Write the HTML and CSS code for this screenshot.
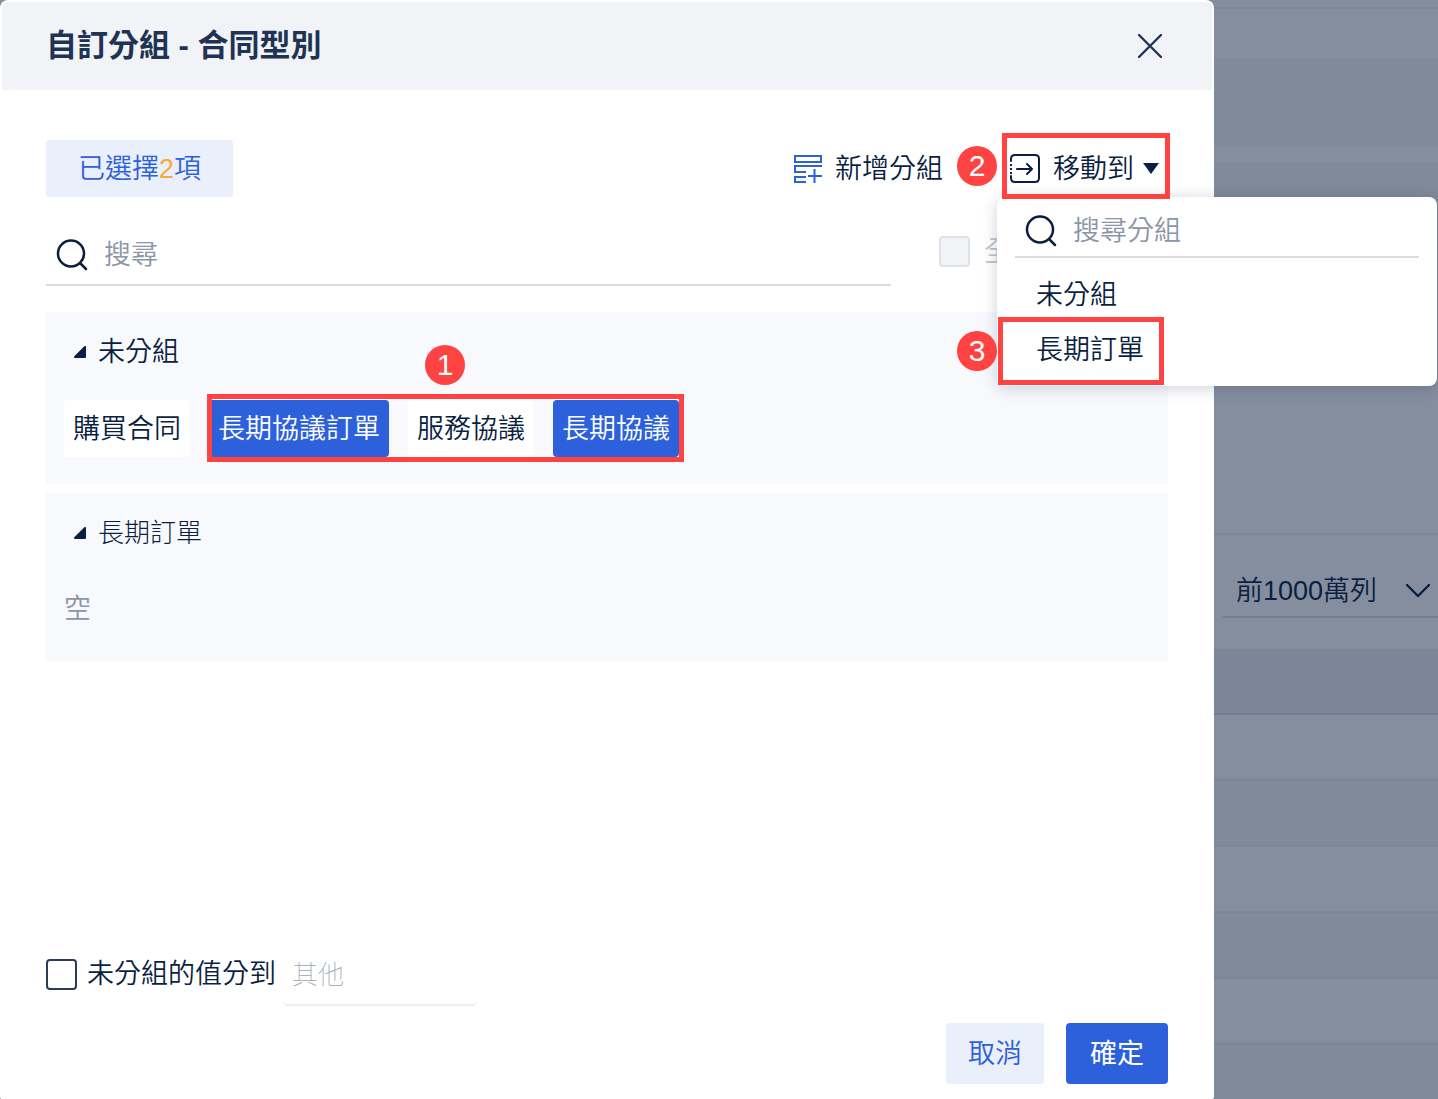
FILE: index.html
```html
<!DOCTYPE html>
<html lang="zh-Hant">
<head>
    <meta charset="UTF-8">
    <meta name="viewport" content="width=device-width, initial-scale=1.0">
    <title>自訂分組 - 合同型別</title>
    <link rel="stylesheet" href="styles.css">
</head>
<body>
    <!-- Page behind the dialog -->
    <div class="page">
        <div class="page-bar"></div>
        <div class="page-strip"></div>
        <div class="page-band"></div>
        <div class="page-divider"></div>
        <div class="page-canvas">
            <div class="page-band"></div>
        </div>
        <div class="page-toolbar">
            <div class="row-limit">
                <select aria-label="列數">
                    <option>前1000萬列</option>
                </select>
                <svg class="chevron" viewBox="0 0 24 14" width="24" height="14"><path d="M1 1l11 11L23 1" fill="none" stroke="currentColor" stroke-width="2.4" stroke-linecap="round" stroke-linejoin="round"/></svg>
            </div>
        </div>
        <div class="grid-header"></div>
        <div class="grid-rows">
            <div class="grid-row"></div>
            <div class="grid-row"></div>
            <div class="grid-row"></div>
            <div class="grid-row"></div>
            <div class="grid-row"></div>
            <div class="grid-row"></div>
        </div>
    </div>

    <div class="dialog" role="dialog" aria-labelledby="dialogTitle">
        <div class="dialog-header">
            <h1 id="dialogTitle">自訂分組 - 合同型別</h1>
            <button class="close-btn" aria-label="關閉">
                <svg viewBox="0 0 24 24" width="24" height="24"><path d="M1 1l22 22M23 1L1 23" fill="none" stroke="currentColor" stroke-width="2.4" stroke-linecap="round"/></svg>
            </button>
        </div>

        <div class="dialog-body">
            <div class="toolbar">
                <button class="selected-count">已選擇<span class="count">2</span>項</button>
                <div class="actions">
                    <button class="action add-group">
                        <svg viewBox="0 0 28 28" width="28" height="28" fill="none" stroke="#2d60db" stroke-width="2">
                            <path d="M1 1h26v6H1zM0 11h28M1 10v7h11M12 27H1v-5h11M20.500 14v14M14 21h14"/>
                        </svg>
                        新增分組
                    </button>
                    <div class="move-to">
                        <button class="action">
                            <svg viewBox="0 0 30 30" width="30" height="30" fill="none" stroke="currentColor" stroke-width="2" stroke-linecap="round" stroke-linejoin="round">
                                <path d="M1 7V5q0-4 4-4h20q4 0 4 4v19q0 4-4 4H5q-4 0-4-4v-2M7 15h15M17 10l5 5-5 5"/>
                                <path d="M0 11h2M0 15h2M0 19h2" stroke-linecap="butt"/>
                            </svg>
                            移動到
                            <svg class="caret" viewBox="0 0 16 12" width="16" height="12"><path d="M0 0h16L8 11z" fill="currentColor"/></svg>
                        </button>
                        <span class="badge">2</span>

                        <div class="menu">
                            <label class="search">
                                <svg viewBox="0 0 32 32" width="32" height="32"><path d="M15 1.500a13 13 0 1 1 0 26 13 13 0 0 1 0-26zM24 24l6 6" fill="none" stroke="currentColor" stroke-width="2.500" stroke-linecap="round"/></svg>
                                <input type="text" placeholder="搜尋分組" aria-label="搜尋分組">
                            </label>
                            <div class="menu-list">
                                <button class="menu-item">未分組</button>
                                <button class="menu-item marked">長期訂單<span class="badge">3</span></button>
                            </div>
                        </div>
                    </div>
                </div>
            </div>

            <div class="filter">
                <label class="search">
                    <svg viewBox="0 0 32 32" width="32" height="32"><path d="M15 1.500a13 13 0 1 1 0 26 13 13 0 0 1 0-26zM24 24l6 6" fill="none" stroke="currentColor" stroke-width="2.500" stroke-linecap="round"/></svg>
                    <input type="text" placeholder="搜尋" aria-label="搜尋">
                </label>
                <label class="select-all"><input class="checkbox" type="checkbox" disabled>全選</label>
            </div>

            <div class="groups">
                <section class="group">
                    <button class="group-title">
                        <svg viewBox="0 0 12 12" width="12" height="12"><path d="M11 1v10H1z" fill="currentColor" stroke="currentColor" stroke-width="2" stroke-linejoin="round"/></svg>
                        未分組
                    </button>
                    <div class="chips">
                        <button class="chip">購買合同</button>
                        <div class="chips-marked">
                            <button class="chip active">長期協議訂單</button>
                            <button class="chip">服務協議</button>
                            <button class="chip active">長期協議</button>
                            <span class="badge">1</span>
                        </div>
                    </div>
                </section>
                <section class="group">
                    <button class="group-title thin">
                        <svg viewBox="0 0 12 12" width="12" height="12"><path d="M11 1v10H1z" fill="currentColor" stroke="currentColor" stroke-width="2" stroke-linejoin="round"/></svg>
                        長期訂單
                    </button>
                    <p class="empty">空</p>
                </section>
            </div>

            <div class="ungrouped">
                <label class="ungrouped-label"><input class="checkbox" type="checkbox">未分組的值分到</label>
                <input class="other-name" type="text" value="其他" aria-label="其他" disabled>
            </div>

            <div class="dialog-footer">
                <button class="button cancel">取消</button>
                <button class="button confirm">確定</button>
            </div>
        </div>
    </div>
</body>
</html>
```
FILE: styles.css
```css
* {
    margin: 0;
    padding: 0;
    box-sizing: border-box;
}

body {
    position: relative;
    min-height: 100vh;
    display: flex;
    font-family: "Liberation Sans", "Noto Sans CJK TC", sans-serif;
    font-size: 27px;
    font-weight: 350;
    line-height: 40px;
    color: #0b1f42;
    background-color: #858e9e;
}

button, input, select {
    font: inherit;
    color: inherit;
    border: none;
    background: none;
}

button {
    cursor: pointer;
    white-space: nowrap;
}

svg {
    display: block;
    flex: none;
}

/* Page behind the dialog */
.page {
    position: absolute;
    inset: 0;
    overflow: hidden;
}

.page-bar {
    height: 9px;
    border-bottom: 2px solid #7a869a;
}

.page-strip {
    height: 49px;
}

.page-band {
    height: 87px;
    background-color: #7f8a9b;
}

.page-divider {
    height: 18px;
}

.page-canvas {
    height: 372px;
    border-bottom: 2px solid #7a869a;
}

.page-toolbar {
    height: 114px;
    display: flex;
    justify-content: flex-end;
    padding: 30px 0 31px;
}

.row-limit {
    width: 215px;
    display: flex;
    align-items: center;
    padding-right: 8px;
    border-bottom: 2px solid #717d93;
}

.row-limit select {
    flex: 1;
    height: 40px;
    padding-left: 13px;
    appearance: none;
}

.row-limit .chevron {
    pointer-events: none;
}

.grid-header {
    height: 66px;
    background-color: #7b8699;
    border-bottom: 2px solid #6f7c92;
}

.grid-row {
    height: 66px;
    border-bottom: 2px solid #79859a;
}

.grid-row:nth-child(even) {
    background-color: #7f8a9b;
}

/* Dialog */
.dialog {
    position: relative;
    flex: 1;
    margin-right: 224px;
    display: flex;
    flex-direction: column;
    border: 2px solid #fff;
    border-bottom: none;
    border-radius: 8px 8px 2px 2px;
    background-color: #fff;
}

.dialog-header {
    height: 88px;
    display: flex;
    justify-content: space-between;
    align-items: center;
    padding: 0 50px 0 44px;
    background-color: #f2f3f7;
    border-radius: 6px 6px 0 0;
}

.dialog-header h1 {
    font-size: 31px;
    font-weight: 700;
    color: #203354;
}

.close-btn {
    color: #203354;
}

.dialog-body {
    flex: 1;
    display: flex;
    flex-direction: column;
    padding: 50px 44px 15px;
}

.toolbar {
    display: flex;
    justify-content: space-between;
    height: 57px;
}

.selected-count {
    padding: 0 32px;
    background-color: #e9effb;
    color: #2d60db;
    border-radius: 4px;
}

.count {
    color: #faa937;
}

.actions {
    display: flex;
    gap: 67px;
}

.action {
    height: 57px;
    display: flex;
    align-items: center;
    gap: 13px;
}

.move-to {
    position: relative;
    z-index: 1;
}

.move-to .action {
    padding-right: 9px;
}

.move-to .caret {
    margin-left: -4px;
}

/* Numbered step markers and their frames */
.move-to::after,
.menu-item.marked::after,
.chips-marked::after {
    content: "";
    position: absolute;
    border: 5px solid #ff4343;
    pointer-events: none;
}

.move-to::after {
    inset: -7px -2px -2px -8px;
}

.badge {
    position: absolute;
    width: 40px;
    height: 40px;
    border-radius: 50%;
    background-color: #ff4343;
    color: #fff;
    font-size: 30px;
    text-align: center;
}

.move-to > .badge {
    top: 6px;
    left: -53px;
}

.menu {
    position: absolute;
    top: 57px;
    left: -13px;
    width: 440px;
    padding: 0 18px;
    background-color: #fff;
    border-radius: 8px;
    box-shadow: 0 2px 16px rgba(11, 31, 66, 0.2);
}

.menu .search {
    height: 61px;
    padding-top: 8px;
}

.menu-list {
    margin: 0 -18px;
    padding: 9px 0;
}

.menu-item {
    position: relative;
    display: block;
    width: 100%;
    height: 55px;
    padding-left: 39px;
    text-align: left;
}

.menu-item.marked::after {
    top: -5px;
    bottom: -8px;
    left: 1px;
    width: 156px;
}

.menu-item .badge {
    top: 9px;
    left: -40px;
}

/* Search */
.search {
    display: flex;
    align-items: center;
    gap: 16px;
    padding: 0 10px;
    border-bottom: 2px solid #d9dde3;
}

.search input {
    flex: 1;
    min-width: 0;
    outline: none;
}

.search input::placeholder {
    color: #8c95a6;
    opacity: 1;
}

.filter {
    display: grid;
    grid-template-columns: 1fr 229px;
    gap: 48px;
    height: 89px;
}

.filter .search {
    padding-top: 28px;
}

.select-all {
    display: flex;
    align-items: center;
    gap: 14px;
    padding-top: 20px;
    color: #bcc3ce;
}

.checkbox {
    appearance: none;
    flex: none;
    width: 31px;
    height: 31px;
    border: 2px solid #2c3b57;
    border-radius: 4px;
}

.checkbox:disabled {
    border-color: #dde1e8;
    background-color: #f2f3f7;
}

/* Groups */
.groups {
    flex: 1;
    display: flex;
    flex-direction: column;
    gap: 9px;
    padding-top: 26px;
}

.group {
    padding: 20px 18px 27px;
    background-color: #f8f9fd;
}

.group-title {
    display: flex;
    align-items: center;
    gap: 12px;
    padding-left: 10px;
}

.thin {
    font-size: 26px;
    font-weight: 300;
}

.chips {
    display: flex;
    gap: 19px;
    margin-top: 28px;
}

.chips-marked {
    position: relative;
    display: flex;
    gap: 19px;
}

.chips-marked::after {
    inset: -6px -5px -5px -2px;
}

.chips-marked .badge {
    top: -55px;
    left: 216px;
}

.chip {
    height: 57px;
    padding: 0 9px;
    border-radius: 4px;
    background-color: #fff;
}

.chip.active {
    background-color: #2d60db;
    color: #fff;
}

.empty {
    margin: 36px 0 5px;
    color: #8c95a6;
}

/* Bottom of the dialog */
.ungrouped {
    display: flex;
    align-items: flex-start;
    gap: 8px;
}

.ungrouped-label {
    display: flex;
    align-items: center;
    gap: 10px;
}

.other-name {
    width: 192px;
    height: 52px;
    padding: 0 8px 14px;
    border-bottom: 2px solid #ecedf3;
    border-radius: 4px;
    font-size: 26px;
    font-weight: 100;
    color: #9aa3b2;
}

.dialog-footer {
    display: flex;
    justify-content: flex-end;
    gap: 22px;
    padding-top: 17px;
}

.button {
    height: 61px;
    padding: 0 22px;
    border-radius: 4px;
}

.cancel {
    background-color: #e9effb;
    color: #2d60db;
}

.confirm {
    padding: 0 24px;
    background-color: #2d60db;
    color: #fff;
    font-weight: 400;
}
```
